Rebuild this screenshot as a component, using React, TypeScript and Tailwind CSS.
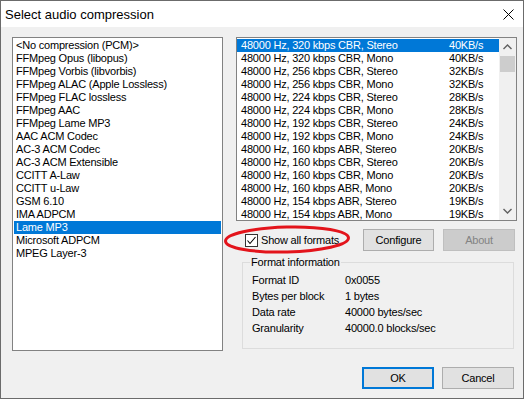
const codecs = [
  "<No compression (PCM)>",
  "FFMpeg Opus (libopus)",
  "FFMpeg Vorbis (libvorbis)",
  "FFMpeg ALAC (Apple Lossless)",
  "FFMpeg FLAC lossless",
  "FFMpeg AAC",
  "FFMpeg Lame MP3",
  "AAC ACM Codec",
  "AC-3 ACM Codec",
  "AC-3 ACM Extensible",
  "CCITT A-Law",
  "CCITT u-Law",
  "GSM 6.10",
  "IMA ADPCM",
  "Lame MP3",
  "Microsoft ADPCM",
  "MPEG Layer-3",
];

const formats: [string, string][] = [
  ["48000 Hz, 320 kbps CBR, Stereo", "40KB/s"],
  ["48000 Hz, 320 kbps CBR, Mono", "40KB/s"],
  ["48000 Hz, 256 kbps CBR, Stereo", "32KB/s"],
  ["48000 Hz, 256 kbps CBR, Mono", "32KB/s"],
  ["48000 Hz, 224 kbps CBR, Stereo", "28KB/s"],
  ["48000 Hz, 224 kbps CBR, Mono", "28KB/s"],
  ["48000 Hz, 192 kbps CBR, Stereo", "24KB/s"],
  ["48000 Hz, 192 kbps CBR, Mono", "24KB/s"],
  ["48000 Hz, 160 kbps ABR, Stereo", "20KB/s"],
  ["48000 Hz, 160 kbps CBR, Stereo", "20KB/s"],
  ["48000 Hz, 160 kbps CBR, Mono", "20KB/s"],
  ["48000 Hz, 160 kbps ABR, Mono", "20KB/s"],
  ["48000 Hz, 154 kbps ABR, Stereo", "19KB/s"],
  ["48000 Hz, 154 kbps ABR, Mono", "19KB/s"],
];

const info: [string, string][] = [
  ["Format ID", "0x0055"],
  ["Bytes per block", "1 bytes"],
  ["Data rate", "40000 bytes/sec"],
  ["Granularity", "40000.0 blocks/sec"],
];

export default function App() {
  return (
    <div className="relative w-[527px] h-[401px] bg-white font-['Liberation_Sans',Arial,sans-serif] text-black">
      <div className="w-[524px] h-[399px] flex flex-col border border-[#6b6b6b]">
        {/* title bar */}
        <div className="h-[26px] shrink-0 bg-white flex items-center justify-between pl-[4px] pr-[9px]">
          <span className="text-[13px] leading-none">Select audio compression</span>
          <svg width="11" height="11" viewBox="0 0 11 11" className="text-black">
            <path d="M0.5 0.5 L10.5 10.5 M10.5 0.5 L0.5 10.5" stroke="currentColor" strokeWidth="1" />
          </svg>
        </div>

        {/* body */}
        <div className="flex-1 bg-[#f0f0f0] flex pt-[10px] pl-[11px] text-[11px] leading-[13px] tracking-[-0.2px]">
          <div className="w-[211px] h-[314px] bg-white border border-[#828282] pt-[1px] pl-[1px] pr-[1px]">
            {codecs.map((c) => (
              <div
                key={c}
                className={
                  "h-[13px] pl-[2px] whitespace-pre " +
                  (c === "Lame MP3" ? "bg-[#0078d7] text-white" : "")
                }
              >
                {c}
              </div>
            ))}
          </div>

          <div className="ml-[13px] w-[281px] flex flex-col">
            {/* formats list */}
            <div className="h-[184px] bg-white border border-[#828282] flex overflow-hidden">
              <div className="flex-1 pt-[1px]">
                {formats.map(([f, r], i) => (
                  <div
                    key={f + i}
                    className={
                      "h-[13px] flex pl-[4px] " + (i === 0 ? "bg-[#0078d7] text-white" : "")
                    }
                  >
                    <span className="w-[208px] whitespace-pre">{f}</span>
                    <span>{r}</span>
                  </div>
                ))}
              </div>
              <div className="w-[17px] bg-[#f0f0f0] flex flex-col">
                <div className="h-[18px] flex items-center justify-center">
                  <svg width="9" height="6" viewBox="0 0 9 6">
                    <path d="M0.5 5 L4.5 1 L8.5 5" stroke="#606060" strokeWidth="1.4" fill="none" />
                  </svg>
                </div>
                <div className="h-[16px] mx-[1px] bg-[#cdcdcd]" />
                <div className="flex-1" />
                <div className="h-[18px] flex items-center justify-center">
                  <svg width="9" height="6" viewBox="0 0 9 6">
                    <path d="M0.5 1 L4.5 5 L8.5 1" stroke="#606060" strokeWidth="1.4" fill="none" />
                  </svg>
                </div>
              </div>
            </div>

            {/* checkbox + buttons */}
            <div className="mt-[8px] h-[22px] flex items-center">
              <label className="w-[127px] pl-[9px] flex items-center gap-[3px]">
                <span className="w-[13px] h-[13px] bg-white border border-[#333333] flex items-center justify-center">
                  <svg width="11" height="11" viewBox="0 0 11 11">
                    <path d="M1.5 5.5 L4 8.5 L9.5 2" stroke="#000" strokeWidth="1.1" fill="none" />
                  </svg>
                </span>
                <span>Show all formats</span>
              </label>
              <div className="w-[71px] h-[22px] bg-[#e1e1e1] border border-[#adadad] flex items-center justify-center">
                Configure
              </div>
              <div className="ml-[9px] w-[72px] h-[22px] bg-[#cccccc] border border-[#bfbfbf] text-[#838383] flex items-center justify-center">
                About
              </div>
            </div>

            {/* format information */}
            <fieldset className="mt-[5px] ml-[6px] w-[272px] border border-[#dcdcdc] px-0">
              <legend className="ml-[7px] px-[1px] leading-[13px]">Format information</legend>
              <div className="pt-[3px] pb-[12px] pl-[9px]">
                {info.map(([k, v]) => (
                  <div key={k} className="h-[16px] flex items-center">
                    <span className="w-[93px]">{k}</span>
                    <span>{v}</span>
                  </div>
                ))}
              </div>
            </fieldset>

            {/* ok / cancel */}
            <div className="mt-[18px] flex justify-end pr-[3px] gap-[8px]">
              <div className="w-[72px] h-[22px] bg-[#e1e1e1] border-2 border-[#0078d7] flex items-center justify-center">
                OK
              </div>
              <div className="w-[72px] h-[22px] bg-[#e1e1e1] border border-[#adadad] flex items-center justify-center">
                Cancel
              </div>
            </div>
          </div>
        </div>
      </div>

      {/* red annotation ring */}
      <svg className="absolute left-[222px] top-[224px] pointer-events-none" width="130" height="32" viewBox="0 0 130 32">
        <ellipse cx="65" cy="15.5" rx="61.5" ry="12.5" fill="none" stroke="#e3141b" strokeWidth="3" transform="rotate(-1.5 65 15.5)" />
      </svg>
    </div>
  );
}
